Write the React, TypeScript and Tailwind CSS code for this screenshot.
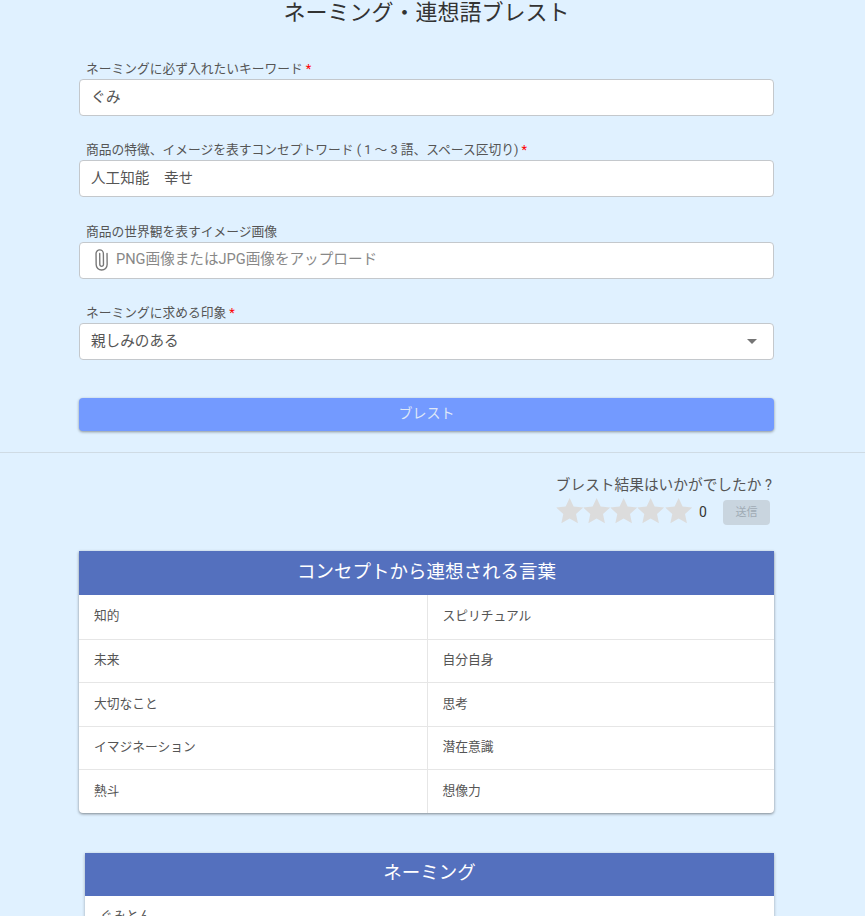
import { Paperclip } from "lucide-react";

const font = { fontFamily: 'Roboto, "Noto Sans CJK JP", sans-serif' };

const rows = [
  ["知的", "スピリチュアル"],
  ["未来", "自分自身"],
  ["大切なこと", "思考"],
  ["イマジネーション", "潜在意識"],
  ["熱斗", "想像力"],
];

function Label({ text, required }: { text: string; required?: boolean }) {
  return (
    <div className="h-[19px] pl-[7px] text-[12.75px] leading-[19px] text-[#555]">
      {text}
      {required && <span className="ml-[3px] text-[#f00]">*</span>}
    </div>
  );
}

function Box({ children }: { children: React.ReactNode }) {
  return (
    <div className="mt-px flex h-[37px] items-center rounded border border-[#c4c8cc] bg-white px-[11px] text-[14.6px] text-[#555]">
      {children}
    </div>
  );
}

function Star() {
  return (
    <svg viewBox="0 0 24 24" className="h-[27.3px] w-[27.3px] fill-[#dcdcdc]">
      <path d="M12 .8l3.5 7.6 8.3.9-6.2 5.6 1.7 8.2L12 18.9l-7.3 4.2 1.7-8.2L.2 9.3l8.3-.9z" />
    </svg>
  );
}

export default function App() {
  return (
    <div className="h-[916px] overflow-hidden bg-[#e0f1ff]" style={font}>
      <div className="pl-[79px] pr-[91px]">
        <h1 className="h-[26px] text-center text-[22px] leading-[26px] text-[#333]">
          ネーミング・連想語ブレスト
        </h1>
        <div className="mt-[33px] flex flex-col gap-[24.3px]">
          <div>
            <Label text="ネーミングに必ず入れたいキーワード" required />
            <Box>ぐみ</Box>
          </div>
          <div>
            <Label text="商品の特徴、イメージを表すコンセプトワード ( 1 ～ 3 語、スペース区切り)" required />
            <Box>人工知能　幸せ</Box>
          </div>
          <div>
            <Label text="商品の世界観を表すイメージ画像" />
            <Box>
              <Paperclip className="ml-[-1px] mr-[4px] h-[22px] w-[22px] rotate-[-45deg] text-[#777]" strokeWidth={1.5} />
              <span className="text-[#888]">PNG画像またはJPG画像をアップロード</span>
            </Box>
          </div>
          <div>
            <Label text="ネーミングに求める印象" required />
            <Box>
              <span className="flex-1 pt-[2px]">親しみのある</span>
              <span className="mr-[5px] h-0 w-0 border-x-[5px] border-t-[5px] border-x-transparent border-t-[#757575]" />
            </Box>
          </div>
        </div>
        <button className="mt-[38px] block h-[33px] w-full rounded bg-[#739aff] pb-[2px] text-[14px] text-[#dfe7f7] shadow-[0_1px_3px_rgba(0,0,0,0.4)]">
          ブレスト
        </button>
      </div>
      <div className="mt-[21px] h-px bg-[#cfdbe4]" />
      <div className="pl-[79px] pr-[91px]">
        <div className="mt-[21px] flex flex-col items-end">
          <div className="pr-[2px] text-[14.7px] leading-[22px] text-[#555]">ブレスト結果はいかがでしたか ?</div>
          <div className="mt-px flex items-center pr-[4px]">
            <div className="mb-[4px] flex">
              <Star />
              <Star />
              <Star />
              <Star />
              <Star />
            </div>
            <span className="ml-[7px] w-[10px] text-[14px] text-[#333]">0</span>
            <span className="ml-[14px] flex h-[25px] w-[47px] items-center justify-center rounded bg-[#c9d5df] pt-px text-[11px] text-[#a0abb5]">
              送信
            </span>
          </div>
        </div>
        <div className="mt-[23px] overflow-hidden rounded-b bg-white shadow-[0_1px_3px_rgba(0,0,0,0.45)]">
          <div className="flex h-[44px] items-center justify-center bg-[#5470be] pb-px text-[18.5px] text-white">
            コンセプトから連想される言葉
          </div>
          {rows.map((row, i) => (
            <div key={i} className={`grid h-[43.5px] grid-cols-2 text-[12.75px] text-[#555] ${i > 0 ? "border-t border-[#e6e6e6]" : ""}`}>
              <div className="flex items-center pb-[2px] pl-[15px]">{row[0]}</div>
              <div className="flex items-center border-l border-[#e6e6e6] pb-[2px] pl-[15px]">{row[1]}</div>
            </div>
          ))}
        </div>
        <div className="ml-[6px] mt-[40px] bg-white shadow-[0_1px_3px_rgba(0,0,0,0.3)]">
          <div className="flex h-[43px] items-center justify-center text-[18.5px] text-white bg-[#5470be]">
            ネーミング
          </div>
          <div className="flex h-[40px] items-center pl-[15px] text-[12.75px] text-[#555]">ぐみとん</div>
        </div>
      </div>
    </div>
  );
}
